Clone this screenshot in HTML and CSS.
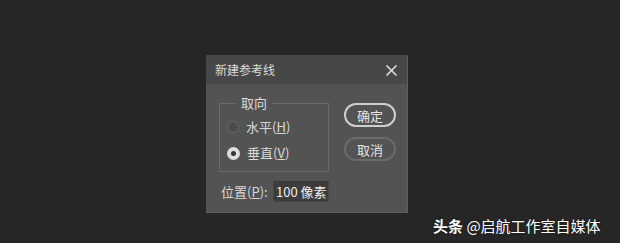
FILE: index.html
```html
<!DOCTYPE html>
<html lang="zh-CN">
<head>
<meta charset="utf-8">
<link rel="stylesheet" href="styles.css">
</head>
<body>
<div class="dialog">
  <div class="titlebar">
    <span class="title">新建参考线</span>
    <svg class="close" width="11" height="11" viewBox="0 0 11 11"><path d="M0.5 0.5 L10.5 10.5 M10.5 0.5 L0.5 10.5" stroke="#e2e2e2" stroke-width="1.5" fill="none"/></svg>
  </div>
  <div class="content">
    <div class="top">
      <div class="group">
        <span class="legend">取向</span>
        <div class="radio-row"><span class="radio"></span><span class="label">水平(<u>H</u>)</span></div>
        <div class="radio-row"><span class="radio checked"></span><span class="label">垂直(<u>V</u>)</span></div>
      </div>
      <div class="buttons">
        <div class="btn primary">确定</div>
        <div class="btn">取消</div>
      </div>
    </div>
    <div class="pos-row">
      <span class="pos-label">位置(<u>P</u>):</span>
      <span class="input">100 像素</span>
    </div>
  </div>
</div>
<div class="watermark"><b>头条</b> @启航工作室自媒体</div>
</body>
</html>
```
FILE: styles.css
```css
html, body {
  margin: 0;
  padding: 0;
}
body {
  background: #262626;
  width: 620px;
  height: 243px;
  overflow: hidden;
  position: relative;
  font-family: "Noto Sans CJK SC", "Noto Sans", sans-serif;
  color: #d8d8d8;
}
.dialog {
  margin-left: 206px;
  margin-top: 55px;
  width: 201px;
  height: 157px;
  background: #535353;
  border-right: 1px solid #5f5f5f;
  border-bottom: 1px solid #5f5f5f;
  display: flex;
  flex-direction: column;
}
.titlebar {
  height: 29px;
  background: #474747;
  display: flex;
  align-items: center;
  justify-content: space-between;
  padding: 0 10px 0 9px;
}
.title {
  font-size: 12px;
  line-height: 14px;
  color: #dcdcdc;
}
.close {
  display: block;
  margin-top: 1px;
}
.content {
  padding: 19px 0 0 13px;
  display: flex;
  flex-direction: column;
}
.top {
  display: flex;
  align-items: flex-start;
}
.group {
  position: relative;
  width: 108px;
  border: 1px solid #6c6c6c;
  padding: 10px 0 0 0;
  box-sizing: content-box;
  height: 57px;
}
.legend {
  position: absolute;
  top: -10px;
  left: 16px;
  padding: 0 5px;
  background: #535353;
  font-size: 13px;
  line-height: 18px;
  color: #dadada;
}
.radio-row {
  height: 26px;
  display: flex;
  align-items: center;
  padding-left: 7px;
}
.radio {
  width: 10px;
  height: 10px;
  border-radius: 50%;
  border: 1.5px solid #6a6a6a;
  background: #4a4a4a;
  flex: none;
}
.radio.checked {
  background: #343434;
  border: 4px solid #dedede;
  width: 5px;
  height: 5px;
}
.label {
  margin-left: 7px;
  font-size: 13px;
  line-height: 16px;
  color: #dadada;
}
u {
  text-decoration: underline;
  text-underline-offset: 1px;
}
.buttons {
  margin-left: 15px;
  display: flex;
  flex-direction: column;
  gap: 10px;
}
.btn {
  width: 48px;
  height: 20px;
  border: 2px solid #6a6a6a;
  border-radius: 12px;
  display: flex;
  align-items: center;
  justify-content: center;
  font-size: 13px;
  color: #e4e4e4;
}
.btn.primary {
  border-color: #cfcfcf;
}
.pos-row {
  margin-top: 9px;
  display: flex;
  align-items: center;
  height: 20px;
  padding-left: 2px;
}
.pos-label {
  font-size: 13px;
  color: #d8d8d8;
  width: 52px;
}
.input {
  width: 52px;
  height: 19px;
  background: #3c3c3c;
  border: 1px solid #474747;
  border-top-color: #383838;
  font-size: 13px;
  line-height: 19px;
  padding-left: 2px;
  color: #eeeeee;
  box-sizing: content-box;
}
.watermark {
  position: absolute;
  left: 433px;
  top: 216px;
  font-size: 15px;
  line-height: 20px;
  color: #ffffff;
  white-space: nowrap;
  text-shadow: 0 0 2px rgba(0,0,0,0.6);
}
.watermark b {
  font-weight: 700;
}
```
